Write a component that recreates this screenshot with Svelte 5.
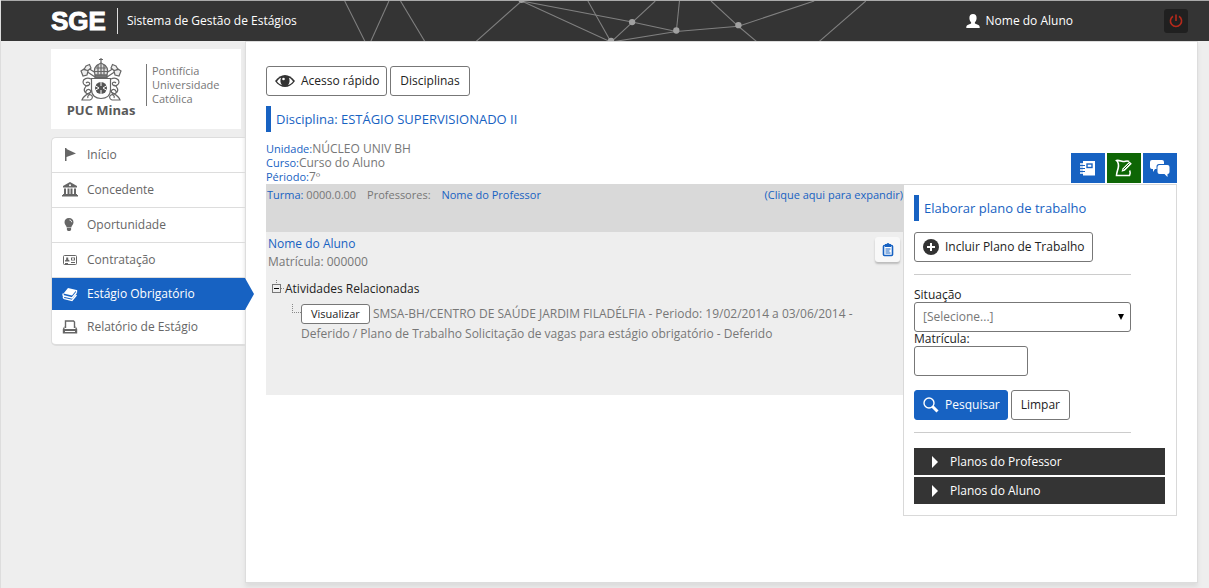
<script>
  let aluno = "Nome do Aluno";
  let situacao = "";
  let matricula = "";
  let paginaAtiva = "estagio";
  let arvoreAberta = true;
  let planosAbertos = { professor: false, aluno: false };

  const menu = [
    { id: "inicio", label: "Início" },
    { id: "concedente", label: "Concedente" },
    { id: "oportunidade", label: "Oportunidade" },
    { id: "contratacao", label: "Contratação" },
    { id: "estagio", label: "Estágio Obrigatório" },
    { id: "relatorio", label: "Relatório de Estágio" },
  ];

  const planos = [
    { id: "professor", label: "Planos do Professor" },
    { id: "aluno", label: "Planos do Aluno" },
  ];

  const linhas = [
    [14, 0, 34, 40],
    [56, 0, 38, 40],
    [67, 0, 91, 40],
    [182, 0, 137, 40],
    [182, 0, 287, 20],
    [182, 0, 267, 39],
    [245, 0, 267, 39],
    [309, 0, 267, 39],
    [287, 20, 329, 29],
    [332, 0, 329, 29],
    [267, 39, 329, 29],
    [329, 29, 388, 24],
    [362, 0, 388, 24],
    [388, 24, 407, 40],
    [388, 24, 460, 0],
    [509, 0, 463, 40],
  ];

  const pontos = [
    [182, -1],
    [267, 38],
    [287, 20],
    [329, 28],
    [388, 23],
  ];

  function limpar() {
    situacao = "";
    matricula = "";
  }

  function alternarPlano(id) {
    planosAbertos[id] = !planosAbertos[id];
  }
</script>

<div class="page">
  <header class="topbar">
    <div class="brand">
      <span class="brand-name">SGE</span>
      <span class="brand-title">Sistema de Gestão de Estágios</span>
    </div>
    <svg class="network" viewBox="0 0 513 38" width="540" height="40" aria-hidden="true">
      {#each linhas as [x1, y1, x2, y2]}
        <line {x1} {y1} {x2} {y2} stroke="#808080" stroke-width="1" />
      {/each}
      {#each pontos as [cx, cy]}
        <circle {cx} {cy} r="3" fill="#a0a0a0" />
      {/each}
    </svg>
    <div class="user">
      <svg viewBox="0 0 14 14" width="14" height="14" aria-hidden="true">
        <path d="M7 0C4.6 0 3.4 1.6 3.4 4c0 1.800.7 3.400 1.700 4.200v1.300L1.600 11C.6 11.500.3 12.200.3 14h13.400c0-1.800-.3-2.500-1.300-3L8.900 9.500V8.200c1-.8 1.700-2.400 1.700-4.200C10.600 1.600 9.400 0 7 0z" fill="#fff" />
      </svg>
      <span>{aluno}</span>
    </div>
    <button class="power" aria-label="Sair">
      <svg viewBox="0 0 14 14" width="14" height="14" fill="none" stroke="#b52a1c" stroke-width="1.600">
        <path d="M4 2.200a5.600 5.600 0 1 0 6 0M7 0.500v6.500" />
      </svg>
    </button>
  </header>

  <div class="layout">
    <aside class="sidebar">
      <div class="logo">
        <div class="logo-mark">
          <svg class="crest" viewBox="0 0 44 44" width="44" height="44" fill="none" stroke="#666" stroke-width="1.200" aria-hidden="true">
            <path d="M22 1v5M20 2.500h4" />
            <path d="M16 18c-2-6 1-10 6-12 5 2 8 6 6 12z" fill="#ddd" />
            <path d="M17 11h10M16 14.500h12M22 6v12M19 7.500v10M25 7.500v10" />
            <path d="M16 18h12v2.500H16z" fill="#777" />
            <path d="M9 11l7 4.500M35 11l-7 4.500M7 14l9 6M37 14l-9 6" />
            <path d="M7 9l3.500-1.500L12 11l-3 2.500-4-1zM37 9l-3.500-1.500L32 11l3 2.500 4-1zM2 14l3-2 4 2-1 4-4 1zM42 14l-3-2-4 2 1 4 4 1z" fill="#eee" />
            <path d="M12.500 21.500h19v11c0 6-4 9-9.500 9s-9.500-3-9.500-9z" fill="#fff" />
            <circle cx="22" cy="31" r="6" fill="#555" stroke="none" />
            <path d="M22 25v4M22 33v4M16 28.500l4 2.500-4 2.500M28 28.500l-4 2.500 4 2.500" stroke="#fff" stroke-width="1" />
            <path d="M12 22C8 20 4 22 4 25s4 5 6 3-1-4-3-2M32 22c4-2 8 0 8 3s-4 5-6 3 1-4 3-2M9 28c-4 2-5 6-2 8s6-1 4-3-5 1-4 3M35 28c4 2 5 6 2 8s-6-1-4-3 5 1 4 3M12 35c-5 3-8 4-9 8h8c3-1 3-4 1-5s-4 1-3 3M32 35c5 3 8 4 9 8h-8c-3-1-3-4-1-5s4 1 3 3" />
          </svg>
          <span class="logo-name">PUC Minas</span>
        </div>
        <div class="logo-text">Pontifícia<br />Universidade<br />Católica</div>
      </div>

      <nav class="menu">
        {#each menu as item}
          <a
            href="#{item.id}"
            class:active={paginaAtiva === item.id}
            on:click|preventDefault={() => (paginaAtiva = item.id)}
          >
            <svg viewBox="0 0 16 16" width="16" height="16" fill="currentColor" aria-hidden="true">
              {#if item.id === "inicio"}
                <path d="M3 1h1.500v13H3zM4.500 2L14 6.500 4.500 10z" />
              {:else if item.id === "concedente"}
                <path d="M8 0l7 4v1.500H1V4zM2 6.500h2V12H2zM5.500 6.500h2V12h-2zM8.500 6.500h2V12h-2zM12 6.500h2V12h-2zM1 12h14v1H1zM0 13h16v1.500H0z" />
                <circle cx="8" cy="3.200" r="1" fill="#fff" />
              {:else if item.id === "oportunidade"}
                <path d="M7 1C4.200 1 2.500 3 2.500 5.200c0 2.300 1.800 3 2.200 5.300h4.600c.4-2.300 2.200-3 2.200-5.300C11.500 3 9.800 1 7 1zM4.900 11h4.200v2L8 14H6l-1.100-1z" />
                <path d="M7.500 3c1.300.2 2 1 2.200 2.200" fill="none" stroke="#fff" />
              {:else if item.id === "contratacao"}
                <rect x="1.500" y="3.500" width="13" height="9" rx="1" fill="none" stroke="currentColor" />
                <path d="M4.200 5.500h2v2l1.300 1v1H3v-1l1.200-1zM9 5.500h4v3H9zM3 11h3v1H3zM9 10h4v1H9z" />
                <circle cx="11" cy="7" r="1" fill="#fff" />
              {:else if item.id === "estagio"}
                <path d="M6 2l8.500 2-4.500 5.500L1.500 7.500z" />
                <path d="M1.500 7.500C.5 8.500 1 9.700 2 10l8 2 4.500-5.500M1.800 10.200c-1 1-.3 2.200.7 2.500l7.500 1.800 4.500-5.500M14.500 4v2.500" fill="none" stroke="currentColor" stroke-width="1.300" />
              {:else}
                <path d="M3.500 9V2h8l1 1v6" fill="none" stroke="currentColor" stroke-width="1.400" />
                <path d="M2.500 7L.8 10v4.500h14.400V10L13.500 7v3h-11zM3 12h10v1H3z" fill-rule="evenodd" />
              {/if}
            </svg>
            <span>{item.label}</span>
          </a>
        {/each}
      </nav>
    </aside>

    <main class="content">
      <div class="actions">
        <button class="btn">
          <svg viewBox="0 0 20 12" width="20" height="12" aria-hidden="true">
            <path d="M0 6c3-4 6.500-6 10-6s7 2 10 6c-3 4-6.500 6-10 6S3 10 0 6z" fill="#333" />
            <path d="M2 6.500c1-1.800 2.500-3 4-3.700-1 2.500-.7 5.500 1 7.200C5 9.500 3.500 8.300 2 6.500zM18 6.500c-1-1.800-2.500-3-4-3.700 1 2.500.7 5.500-1 7.200 2-.5 3.500-1.700 5-3.500z" fill="#fff" />
            <circle cx="8.500" cy="4" r="1.300" fill="#fff" />
          </svg>
          Acesso rápido
        </button>
        <button class="btn">Disciplinas</button>
      </div>

      <h1 class="title">Disciplina: ESTÁGIO SUPERVISIONADO II</h1>

      <div class="info-row">
        <dl class="info">
          <div><dt>Unidade:</dt><dd>NÚCLEO UNIV BH</dd></div>
          <div><dt>Curso:</dt><dd>Curso do Aluno</dd></div>
          <div><dt>Périodo:</dt><dd>7º</dd></div>
        </dl>
        <div class="tabs">
          <button class="tab" aria-label="Agenda">
            <svg viewBox="0 0 18 18" width="18" height="18" aria-hidden="true">
              <path d="M4 2h12v14.500H4z" fill="#fff" />
              <path d="M1 5h4M1 8h4M1 11h4M1 14h4" stroke="#fff" stroke-width="1.600" />
              <path d="M4 6.500h2M4 9.500h2M4 12.500h2" stroke="#1762c2" />
              <rect x="8" y="5" width="5" height="3.500" fill="none" stroke="#1762c2" stroke-width="1.400" />
            </svg>
          </button>
          <button class="tab selected" aria-label="Plano de trabalho">
            <svg viewBox="0 0 18 18" width="18" height="18" fill="none" stroke="#fff" stroke-width="1.600" aria-hidden="true">
              <path d="M14 2.500c-2-1.300-4 .3-6 0C5.500 2 3.500.8 1.500 1.500c2 2 2.500 4 1.700 7.500C2.500 12 1.500 14 1.500 16.500h13c1-1.500 1-3 .2-5" />
              <path d="M7.500 9.500L14.500 2.500l2.300 2.300-7 7-3.300 1z" fill="#fff" stroke="none" />
              <path d="M8.500 10.500l6-6" stroke="#0e6605" stroke-width="1" />
            </svg>
          </button>
          <button class="tab" aria-label="Mensagens">
            <svg viewBox="0 0 20 18" width="20" height="18" fill="#fff" aria-hidden="true">
              <path d="M2 1h10q2 0 2 2v2H9Q6.500 5 6.500 7.500V10H5l-2 3v-3H2Q0 10 0 8V3q0-2 2-2z" />
              <path d="M9.500 6h8q2 0 2 2v5q0 2-2 2v3l-3-3h-5q-2 0-2-2V8q0-2 2-2z" />
            </svg>
          </button>
        </div>
      </div>

      <div class="columns">
        <section class="turma">
          <div class="turma-header">
            <p>
              <span class="blue">Turma:</span> 0000.0.00
              <span class="teachers">Professores:</span>
              <a href="#professor">Nome do Professor</a>
            </p>
            <a href="#expandir">(Clique aqui para expandir)</a>
          </div>
          <div class="turma-body">
            <div class="student">
              <div>
                <a href="#aluno">{aluno}</a>
                <p>Matrícula: 000000</p>
              </div>
              <button class="clip" aria-label="Plano do aluno">
                <svg viewBox="0 0 12 14" width="12" height="14" aria-hidden="true">
                  <rect x="1.500" y="2.500" width="9" height="10" rx="1" fill="#fff" stroke="#1762c2" stroke-width="1.600" />
                  <path d="M3 1h1.500Q6-1 7.500 1H9v3H3z" fill="#1762c2" />
                  <path d="M3.500 6h5M3.500 8h4M3.500 10h5" stroke="#1762c2" />
                </svg>
              </button>
            </div>

            <div class="tree">
              <button
                class="tree-toggle"
                aria-expanded={arvoreAberta}
                on:click={() => (arvoreAberta = !arvoreAberta)}
              >
                <svg viewBox="0 0 14 18" width="14" height="18" fill="none" aria-hidden="true">
                  <path d="M5.500 0v4M10 8.500h4" stroke="#888" stroke-dasharray="1 1" />
                  <rect x="1.500" y="4.500" width="8" height="8" stroke="#777" />
                  <path d="M3 8.500h5" stroke="#000" />
                </svg>
                Atividades Relacionadas
              </button>
              {#if arvoreAberta}
                <div class="activity">
                  <svg class="branch" viewBox="0 0 9 10" width="9" height="10" aria-hidden="true">
                    <path d="M.5 0v9M0 8.500h9" fill="none" stroke="#888" stroke-dasharray="1 1" />
                  </svg>
                  <p>
                    <button class="btn small">Visualizar</button>
                    SMSA-BH/CENTRO DE SAÚDE JARDIM FILADÉLFIA - Periodo: 19/02/2014 a 03/06/2014 - Deferido / Plano de Trabalho Solicitação de vagas para estágio obrigatório - Deferido
                  </p>
                </div>
              {/if}
            </div>
          </div>
        </section>

        <section class="panel">
          <h2 class="title">Elaborar plano de trabalho</h2>
          <button class="btn">
            <svg viewBox="0 0 16 16" width="16" height="16" aria-hidden="true">
              <circle cx="8" cy="8" r="8" fill="#333" />
              <path d="M8 4v8M4 8h8" stroke="#fff" stroke-width="2" />
            </svg>
            Incluir Plano de Trabalho
          </button>

          <form class="search" on:submit|preventDefault>
            <label for="situacao">Situação</label>
            <div class="select-box">
              <select id="situacao" bind:value={situacao}>
                <option value="">[Selecione...]</option>
                <option value="deferido">Deferido</option>
                <option value="indeferido">Indeferido</option>
              </select>
              <svg viewBox="0 0 6 6" width="6" height="6" aria-hidden="true">
                <path d="M0 0h6L3 6z" fill="#000" />
              </svg>
            </div>
            <label for="matricula">Matrícula:</label>
            <input id="matricula" type="text" bind:value={matricula} />
            <div class="form-actions">
              <button type="submit" class="btn primary">
                <svg viewBox="0 0 16 16" width="16" height="16" fill="none" stroke="#fff" aria-hidden="true">
                  <circle cx="6" cy="6" r="5" stroke-width="1.400" />
                  <path d="M9.500 9.500l5 5" stroke-width="3" />
                </svg>
                Pesquisar
              </button>
              <button type="button" class="btn" on:click={limpar}>Limpar</button>
            </div>
          </form>

          <div class="accordion">
            {#each planos as plano}
              <button
                aria-expanded={planosAbertos[plano.id]}
                on:click={() => alternarPlano(plano.id)}
              >
                <svg viewBox="0 0 6 12" width="6" height="12" aria-hidden="true">
                  <path d="M0 0l6 6-6 6z" fill="#fff" />
                </svg>
                {plano.label}
              </button>
            {/each}
          </div>
        </section>
      </div>
    </main>
  </div>
</div>

<style>
  :global(body) {
    background: #eee;
  }

  .page {
    font-family: "Open Sans", "Noto Sans", sans-serif;
    font-size: 12px;
    line-height: 18px;
    color: #777;
    min-height: 100vh;
    box-sizing: border-box;
    border-left: 1px solid #ddd;
  }

  button,
  select,
  input {
    font: inherit;
    box-sizing: border-box;
  }

  button {
    cursor: pointer;
  }

  p,
  h1,
  h2,
  dl,
  dd {
    margin: 0;
  }

  a {
    color: #1762c2;
    text-decoration: none;
  }

  svg {
    flex: none;
  }

  .topbar {
    display: grid;
    grid-template-columns: 279px 1fr auto 24px;
    align-items: center;
    height: 41px;
    box-sizing: border-box;
    padding: 0 21px 0 50px;
    background: #343434;
    border-top: 1px solid #aaa;
    color: #fff;
    font-weight: 500;
  }

  .brand {
    display: flex;
    align-items: center;
  }

  .brand-name {
    font-family: "Liberation Sans", Arial, sans-serif;
    font-size: 26px;
    font-weight: 700;
    line-height: 26px;
    padding-right: 11px;
    border-right: 1px solid #ddd;
    -webkit-text-stroke: 1px #fff;
  }

  .brand-title {
    padding-left: 9px;
  }

  .network {
    display: block;
  }

  .user {
    display: flex;
    align-items: center;
    gap: 6px;
    margin-right: 91px;
  }

  .power {
    display: flex;
    align-items: center;
    justify-content: center;
    width: 24px;
    height: 24px;
    padding: 0;
    border: none;
    border-radius: 3px;
    background: #202020;
  }

  .layout {
    display: grid;
    grid-template-columns: 194px 1fr;
    padding: 0 11px 5px 50px;
  }

  .sidebar {
    padding-top: 8px;
  }

  .logo {
    display: flex;
    height: 80px;
    box-sizing: border-box;
    margin-right: 4px;
    padding: 8px 0 0 16px;
    background: #fff;
  }

  .logo-mark {
    display: flex;
    flex-direction: column;
    align-items: center;
    width: 68px;
  }

  .logo-name {
    font-size: 13px;
    line-height: 18px;
    font-weight: 700;
    color: #5a5a5a;
    white-space: nowrap;
  }

  .logo-text {
    align-self: flex-start;
    margin: 7px 0 0 11px;
    padding-left: 5px;
    border-left: 1px solid #777;
    font-size: 11px;
    line-height: 14px;
  }

  .menu {
    margin-top: 8px;
    background: #fff;
    border: 1px solid #ddd;
    border-right: none;
    border-bottom-width: 2px;
    border-radius: 5px 0 0 5px;
  }

  .menu a {
    display: flex;
    align-items: center;
    gap: 9px;
    height: 34px;
    padding-left: 10px;
    border-bottom: 1px solid #ddd;
    color: #666;
  }

  .menu a:last-child {
    border-bottom: none;
  }

  .menu a.active {
    position: relative;
    height: 32px;
    border-bottom: none;
    background: #1762c2;
    color: #fff;
  }

  .menu a.active::after {
    content: "";
    position: absolute;
    left: 100%;
    top: 0;
    width: 9px;
    height: 100%;
    background: #1762c2;
    clip-path: polygon(0 0, 100% 50%, 0 100%);
  }

  .content {
    padding: 24px 20px 66px;
    background: #fff;
    border: 1px solid #ddd;
    box-shadow: 0 4px 4px #ddd;
  }

  .actions {
    display: flex;
    gap: 3px;
    margin-bottom: 10px;
  }

  .btn {
    display: inline-flex;
    align-items: center;
    gap: 6px;
    height: 30px;
    padding: 0 9px;
    background: #fff;
    border: 1px solid #777;
    border-radius: 3px;
    color: #222;
    white-space: nowrap;
  }

  .btn:has(svg) {
    padding: 0 7px 0 8px;
  }

  .btn.primary {
    background: #1762c2;
    border-color: #1762c2;
    color: #fff;
    font-weight: 500;
  }

  .btn.small {
    height: 20px;
    font-size: 11px;
  }

  .title {
    padding-left: 5px;
    border-left: 5px solid #1762c2;
    font-size: 13px;
    line-height: 26px;
    font-weight: 400;
    color: #1762c2;
  }

  .info-row {
    display: flex;
    justify-content: space-between;
    align-items: flex-end;
    margin-top: 10px;
  }

  .info {
    line-height: 14px;
  }

  .info div {
    display: flex;
    height: 14px;
    align-items: baseline;
  }

  .info dt {
    font-size: 11px;
  }

  .info dt,
  .blue {
    color: #1762c2;
  }

  .tabs {
    display: flex;
    gap: 2px;
    margin-bottom: 1px;
  }

  .tab {
    display: flex;
    align-items: center;
    justify-content: center;
    width: 34px;
    height: 30px;
    padding: 0;
    border: none;
    background: #1762c2;
  }

  .tab.selected {
    background: #0e6605;
  }

  .columns {
    display: grid;
    grid-template-columns: 1fr 274px;
    align-items: start;
  }

  .turma-header {
    display: flex;
    justify-content: space-between;
    height: 48px;
    box-sizing: border-box;
    padding: 2px 0 0 1px;
    background: #d9d9d9;
    font-size: 11px;
  }

  .teachers {
    margin: 0 8px;
  }

  .turma-body {
    min-height: 163px;
    box-sizing: border-box;
    padding: 3px 3px 20px 2px;
    background: #eee;
  }

  .student {
    display: flex;
    justify-content: space-between;
  }

  .clip {
    display: flex;
    align-items: center;
    justify-content: center;
    width: 25px;
    height: 25px;
    margin-top: 2px;
    padding: 0;
    border: none;
    border-radius: 3px;
    background: #f8f8f8;
    box-shadow: 0 2px 2px #bbb;
  }

  .tree {
    margin-top: 9px;
    padding-left: 3px;
  }

  .tree-toggle {
    display: flex;
    align-items: center;
    padding: 0;
    border: none;
    background: none;
    color: #222;
  }

  .activity {
    display: flex;
    align-items: flex-start;
    margin-top: 6px;
    padding: 0 36px 0 21px;
  }

  .activity p {
    line-height: 20px;
  }

  .panel {
    padding: 10px 11px 11px 10px;
    border: 1px solid #d9d9d9;
    background: #fff;
  }

  .panel .title {
    margin-bottom: 11px;
  }

  .search {
    display: flex;
    flex-direction: column;
    align-items: flex-start;
    margin: 12px 34px 15px 0;
    padding: 13px 0 12px;
    border-top: 1px solid #ccc;
    border-bottom: 1px solid #ccc;
    color: #222;
  }

  .search label {
    line-height: 14px;
  }

  .select-box {
    display: grid;
    width: 100%;
    align-items: center;
  }

  .select-box > * {
    grid-area: 1 / 1;
  }

  .select-box svg {
    justify-self: end;
    margin-right: 7px;
    pointer-events: none;
  }

  select,
  input {
    width: 100%;
    height: 30px;
    padding: 0 8px;
    border: 1px solid #777;
    border-radius: 3px;
    background: #fff;
    color: #777;
    appearance: none;
  }

  input {
    width: 114px;
  }

  .form-actions {
    display: flex;
    gap: 3px;
    margin-top: 14px;
  }

  .accordion {
    display: grid;
    gap: 2px;
  }

  .accordion button {
    display: flex;
    align-items: center;
    gap: 12px;
    height: 27px;
    padding: 0 18px;
    border: none;
    background: #343434;
    color: #fff;
    font-weight: 500;
  }
</style>
